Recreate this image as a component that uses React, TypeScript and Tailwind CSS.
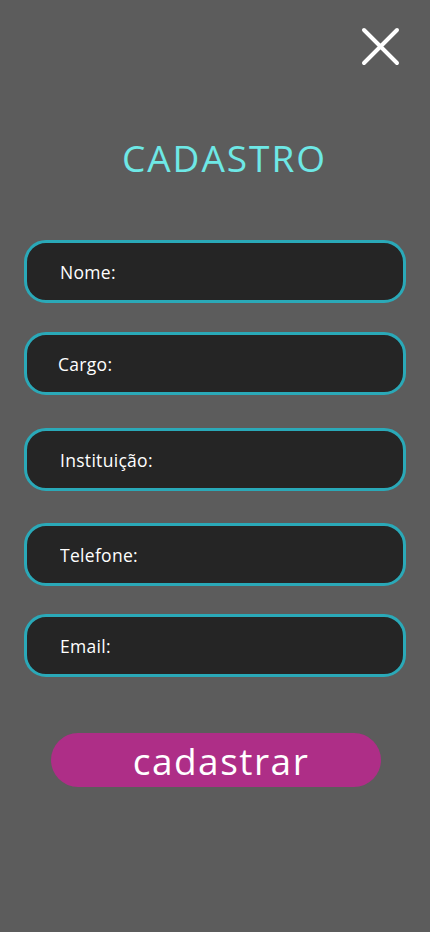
import { useState } from "react"

const fields = [
  { name: "nome", label: "Nome:", mt: "mt-[60px]", pl: "pl-[33px]" },
  { name: "cargo", label: "Cargo:", mt: "mt-[29px]", pl: "pl-[31px]" },
  { name: "instituicao", label: "Instituição:", mt: "mt-[33px]", pl: "pl-[33px]" },
  { name: "telefone", label: "Telefone:", mt: "mt-[32px]", pl: "pl-[33px]" },
  { name: "email", label: "Email:", mt: "mt-[28px]", pl: "pl-[33px]" },
]

export default function App() {
  const [values, setValues] = useState<Record<string, string>>({})

  return (
    <div className="min-h-[932px] bg-[#5c5c5c] font-['Open_Sans',sans-serif] flex flex-col">
      <div className="flex justify-end pt-[27px] pr-[30px]">
        <button className="w-[39px] h-[39px] flex items-center justify-center">
          <svg width="39" height="39" viewBox="0 0 39 39" fill="none" stroke="white" strokeWidth="4" strokeLinecap="round">
            <path d="M3 3L36 36M36 3L3 36" />
          </svg>
        </button>
      </div>

      <h1 className="mt-[70px] pl-[19px] text-center text-[37px] leading-[44px] text-[#6ee8e6] tracking-[2px]">CADASTRO</h1>

      <form className="flex flex-col px-[24px]">
        {fields.map((f) => (
          <input
            key={f.name}
            value={values[f.name] ?? ""}
            onChange={(e) => setValues({ ...values, [f.name]: e.target.value })}
            placeholder={f.label}
            className={`${f.mt} ${f.pl} h-[63px] w-full rounded-[22px] border-[3px] border-[#2aa9b8] bg-[#252525] text-[17.5px] tracking-[0.3px] text-white placeholder:text-white outline-none`}
          />
        ))}

        <button
          type="button"
          className="mt-[56px] ml-[27px] w-[330px] h-[54px] pl-[10px] rounded-full bg-[#ae2e87] text-white text-[37px] leading-none tracking-[1.5px]"
        >
          cadastrar
        </button>
      </form>
    </div>
  )
}
